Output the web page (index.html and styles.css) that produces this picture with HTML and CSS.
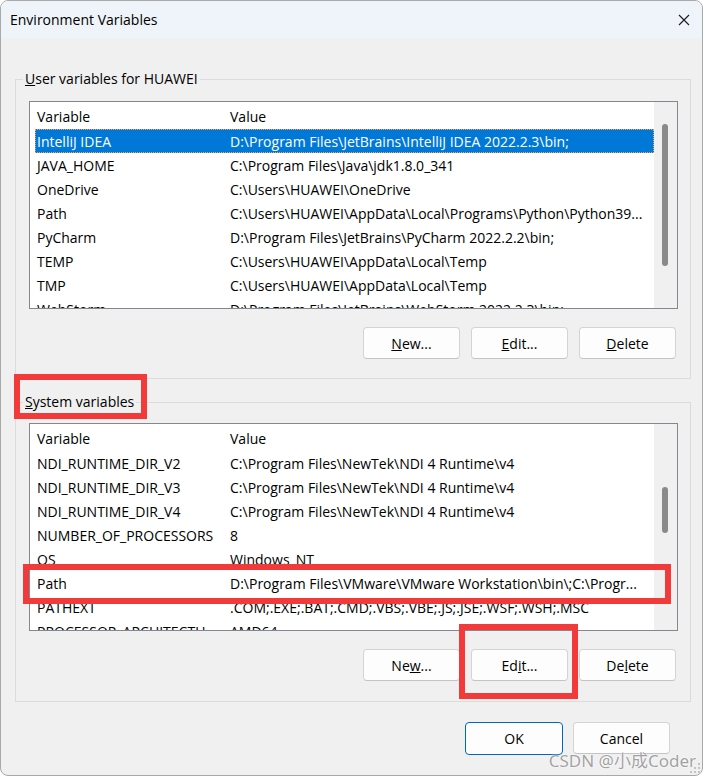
FILE: index.html
```html
<!DOCTYPE html>
<html>
<head>
	<meta charset="utf-8">
	<meta name="viewport" content="width=device-width, initial-scale=1">
	<title>Environment Variables</title>
	<link rel="stylesheet" href="styles.css">
</head>
<body>

<div class="window">
  <div class="titlebar">
    <span class="title">Environment Variables</span>
    <svg class="close" width="12" height="12" viewBox="0 0 12 12">
      <path d="M1 1 L11 11 M11 1 L1 11" stroke="#1a1a1a" stroke-width="1.1" fill="none"/>
    </svg>
  </div>

  <div class="content">

    <!-- user variables -->
    <fieldset class="group">
      <legend><u>U</u>ser variables for HUAWEI</legend>
      <div class="listview">
        <div class="list">
          <div class="head"><span>Variable</span><span class="sep">Value</span></div>
          <div class="row selected"><span>IntelliJ IDEA</span><span>D:\Program Files\JetBrains\IntelliJ IDEA 2022.2.3\bin;</span></div>
          <div class="row"><span>JAVA_HOME</span><span>C:\Program Files\Java\jdk1.8.0_341</span></div>
          <div class="row"><span>OneDrive</span><span>C:\Users\HUAWEI\OneDrive</span></div>
          <div class="row"><span>Path</span><span>C:\Users\HUAWEI\AppData\Local\Programs\Python\Python39...</span></div>
          <div class="row"><span>PyCharm</span><span>D:\Program Files\JetBrains\PyCharm 2022.2.2\bin;</span></div>
          <div class="row"><span>TEMP</span><span>C:\Users\HUAWEI\AppData\Local\Temp</span></div>
          <div class="row"><span>TMP</span><span>C:\Users\HUAWEI\AppData\Local\Temp</span></div>
          <div class="row"><span>WebStorm</span><span>D:\Program Files\JetBrains\WebStorm 2022.2.3\bin;</span></div>
        </div>
        <div class="scrollbar"><div class="thumb user-thumb"></div></div>
      </div>
      <div class="buttons">
        <button class="btn"><u>N</u>ew...</button>
        <button class="btn"><u>E</u>dit...</button>
        <button class="btn"><u>D</u>elete</button>
      </div>
    </fieldset>

    <!-- system variables -->
    <fieldset class="group system">
      <legend><u>S</u>ystem variables</legend>
      <div class="listview">
        <div class="list">
          <div class="head"><span>Variable</span><span class="sep">Value</span></div>
          <div class="row"><span>NDI_RUNTIME_DIR_V2</span><span>C:\Program Files\NewTek\NDI 4 Runtime\v4</span></div>
          <div class="row"><span>NDI_RUNTIME_DIR_V3</span><span>C:\Program Files\NewTek\NDI 4 Runtime\v4</span></div>
          <div class="row"><span>NDI_RUNTIME_DIR_V4</span><span>C:\Program Files\NewTek\NDI 4 Runtime\v4</span></div>
          <div class="row"><span>NUMBER_OF_PROCESSORS</span><span>8</span></div>
          <div class="row"><span>OS</span><span>Windows_NT</span></div>
          <div class="row"><span>Path</span><span>D:\Program Files\VMware\VMware Workstation\bin\;C:\Progr...</span></div>
          <div class="row"><span>PATHEXT</span><span>.COM;.EXE;.BAT;.CMD;.VBS;.VBE;.JS;.JSE;.WSF;.WSH;.MSC</span></div>
          <div class="row"><span>PROCESSOR_ARCHITECTU...</span><span>AMD64</span></div>
        </div>
        <div class="scrollbar"><div class="thumb sys-thumb"></div></div>
      </div>
      <div class="buttons">
        <button class="btn">Ne<u>w</u>...</button>
        <button class="btn">Ed<u>i</u>t...</button>
        <button class="btn">De<u>l</u>ete</button>
      </div>
    </fieldset>

    <div class="dialog-buttons">
      <button class="btn ok">OK</button>
      <button class="btn">Cancel</button>
    </div>
  </div>

  <!-- annotations drawn over the dialog -->
  <div class="mark mark-label"></div>
  <div class="mark mark-path"></div>
  <div class="mark mark-edit"></div>

  <svg class="grip" width="12" height="12" viewBox="0 0 12 12">
    <rect x="9" y="1" width="2" height="2" fill="#c4c4c4"/>
    <rect x="5" y="5" width="2" height="2" fill="#c4c4c4"/>
    <rect x="9" y="5" width="2" height="2" fill="#c4c4c4"/>
    <rect x="1" y="9" width="2" height="2" fill="#c4c4c4"/>
    <rect x="5" y="9" width="2" height="2" fill="#c4c4c4"/>
    <rect x="9" y="9" width="2" height="2" fill="#c4c4c4"/>
  </svg>
  <div class="watermark">CSDN @小成Coder</div>
</div>

</body>
</html>
```

FILE: styles.css
```css
body {
  margin: 0;
  background-color: #fff;
  font-family: "Open Sans", "Noto Sans", sans-serif;
  font-size: 14px;
  color: #000;
}

.window {
  position: relative;
  width: 701px;
  height: 774px;
  border: 1px solid #a9a9a9;
  border-radius: 8px;
  background-color: #f0f0f0;
  overflow: hidden;
}

.titlebar {
  height: 37px;
  background-color: #eef4f9;
  display: flex;
  align-items: center;
  justify-content: space-between;
  padding: 0 12px 0 9px;
}
.title {
  font-size: 14px;
}

.content {
  padding: 0 11px 0 14px;
}

/* group boxes */
.group {
  margin: 31px 0 0 0;
  border: 1px solid #dcdcdc;
  padding: 12px 12px 19px 13px;
  min-width: 0;
}
.group legend {
  margin-left: -6px;
  padding: 0 2px;
  line-height: 20px;
}
.group.system {
  margin-top: 13px;
  padding-top: 11px;
  padding-bottom: 20px;
}

/* list view */
.listview {
  display: flex;
  height: 206px;
  border: 1px solid #828790;
  background-color: #fff;
}
.list {
  flex: 1;
  overflow: hidden;
  padding-left: 5px;
}
.head,
.row {
  display: grid;
  grid-template-columns: 193px 1fr;
  white-space: nowrap;
  box-sizing: border-box;
}
.head span,
.row span {
  padding-left: 2px;
  overflow: hidden;
}
.head {
  height: 27px;
  padding-top: 2px;
  line-height: 25px;
}
.head .sep {
  position: relative;
}
.head .sep::before {
  content: "";
  position: absolute;
  left: -5px;
  top: -2px;
  bottom: 2px;
  width: 1px;
  background-color: #e5e5e5;
}
.row {
  height: 24px;
  padding-top: 2px;
  line-height: 22px;
}
.row.selected {
  background-color: #0078d7;
  color: #fff;
  outline: 1px dotted #f1a75a;
  outline-offset: -1px;
}

.scrollbar {
  width: 23px;
  background-color: #f0f0f0;
  position: relative;
}
.thumb {
  position: absolute;
  left: 8px;
  width: 6px;
  border-radius: 3px;
  background-color: #8a8a8a;
}
.user-thumb {
  top: 22px;
  height: 142px;
}
.sys-thumb {
  top: 63px;
  height: 46px;
}

/* buttons */
.buttons {
  display: flex;
  justify-content: flex-end;
  gap: 11px;
  margin-top: 18px;
  padding-right: 2px;
}
.btn {
  width: 97px;
  height: 32px;
  font-family: inherit;
  font-size: 14px;
  color: #000;
  background-color: #fdfdfd;
  border: 1px solid #d4d4d4;
  border-bottom-color: #c4c4c4;
  border-radius: 4px;
  padding: 0;
}
.dialog-buttons {
  display: flex;
  justify-content: flex-end;
  gap: 10px;
  margin-top: 20px;
  padding-right: 21px;
}
.btn.ok {
  width: 98px;
  height: 33px;
  border-color: #0067c0;
}

/* red annotation boxes */
.mark {
  position: absolute;
  border: 6px solid #f33a3b;
  box-sizing: border-box;
}
.mark-label {
  left: 13px;
  top: 373px;
  width: 133px;
  height: 45px;
}
.mark-path {
  left: 22px;
  top: 563px;
  width: 648px;
  height: 40px;
}
.mark-edit {
  left: 458px;
  top: 623px;
  width: 119px;
  height: 75px;
}

.watermark {
  position: absolute;
  right: 6px;
  bottom: 3px;
  font-family: "Noto Sans", "Noto Sans CJK SC", sans-serif;
  font-size: 17px;
  color: rgba(130, 130, 130, 0.75);
  text-shadow: 0 0 2px #fff, 0 0 1px #fff;
}
.grip {
  position: absolute;
  right: 1px;
  bottom: 1px;
}
```
